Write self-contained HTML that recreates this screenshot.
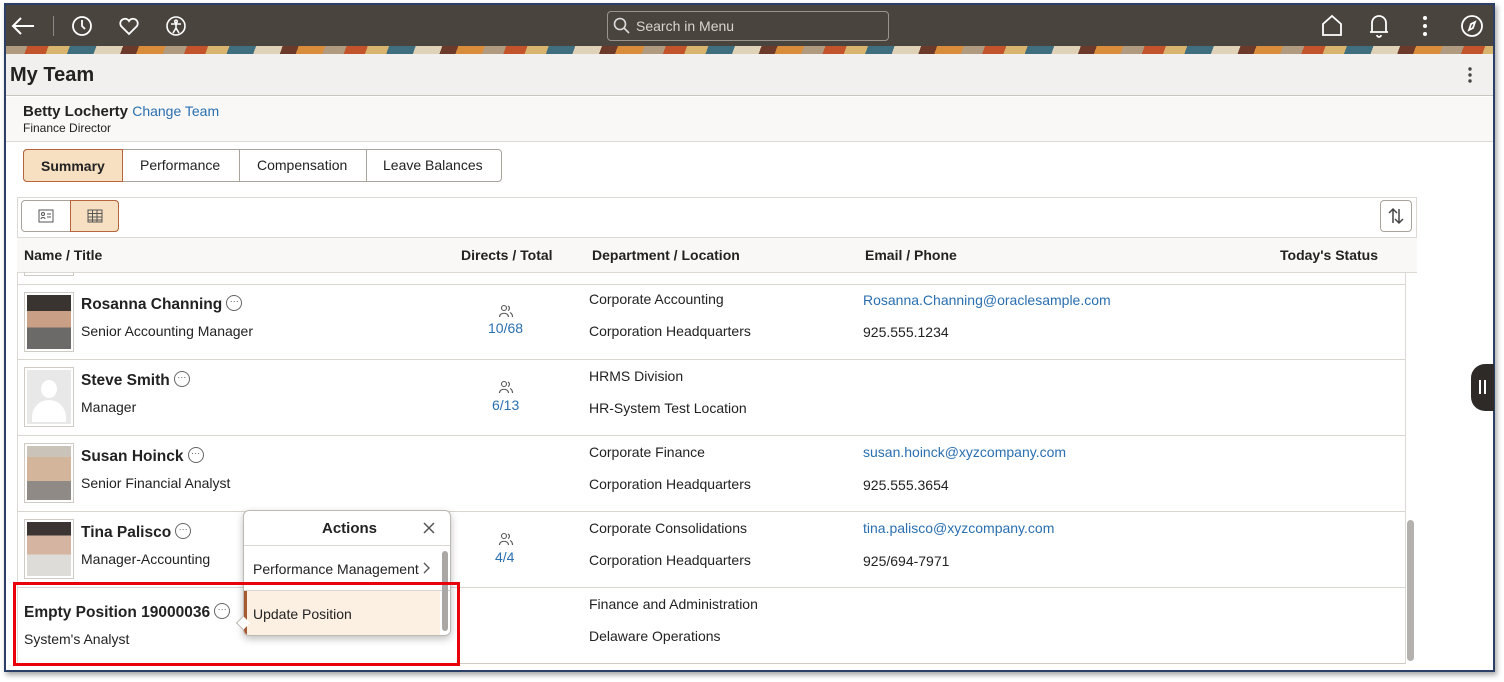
<!DOCTYPE html>
<html><head><meta charset="utf-8"><style>
*{box-sizing:border-box;margin:0;padding:0}
body{width:1504px;height:682px;background:#fff;font-family:"Liberation Sans",Arial,sans-serif;position:relative;overflow:hidden;color:#222}
.a{position:absolute}
.t{font-size:14px;white-space:nowrap}
.b{font-weight:bold}
.nm{font-size:15.5px}
.lnk{color:#2a6fb0}
.hl{height:1px;background:#d9d6d2}
.ph{position:absolute;left:24px;width:50px;height:60px;border:1px solid #cfcac4;background:#fff;padding:2px}
.ph div{width:100%;height:100%}
.dots{display:inline-block;width:16px;height:16px;border:1px solid #666;border-radius:50%;vertical-align:middle;position:relative;top:-2px;margin-left:4px;font-size:9px;line-height:10px;text-align:center;color:#555;font-weight:normal}
</style></head><body>
<div class="a" style="left:4px;top:3px;width:1491px;height:669px;border:2px solid #2c3f66;box-shadow:2px 3px 5px rgba(0,0,0,.35);background:#fff"></div>
<div class="a" style="left:6px;top:5px;width:1487px;height:41px;background:#4a443e"></div>
<div class="a" style="left:6px;top:46px;width:1487px;height:8px;background:repeating-linear-gradient(110deg,#b09a80 0 20px,#c2532a 20px 40px,#d9b46e 40px 60px,#3f6f7e 60px 85px,#e0d2b8 85px 110px,#6b3a2a 110px 125px,#d98c3a 125px 150px)"></div>
<svg class="a" style="left:10px;top:13px" width="26" height="26" viewBox="0 0 26 26" fill="none" stroke="#fff" stroke-width="2"><path d="M24 13H3M11 5l-8 8 8 8"/></svg>
<div class="a" style="left:53px;top:16px;width:1px;height:20px;background:#888"></div>
<svg class="a" style="left:71px;top:15px" width="22" height="22" viewBox="0 0 22 22" fill="none" stroke="#fff" stroke-width="1.8"><circle cx="11" cy="11" r="9"/><path d="M11 5v6l3 3"/></svg>
<svg class="a" style="left:118px;top:15px" width="22" height="22" viewBox="0 0 22 22" fill="none" stroke="#fff" stroke-width="1.8"><path d="M11 19L3 11a4.5 4.5 0 018-5 4.5 4.5 0 018 5z"/></svg>
<svg class="a" style="left:165px;top:15px" width="22" height="22" viewBox="0 0 22 22" fill="none" stroke="#fff" stroke-width="1.6"><circle cx="11" cy="11" r="9"/><circle cx="11" cy="6.5" r="1.3"/><path d="M6 9h10M11 9v4l-3 5M11 13l3 5"/></svg>
<div class="a" style="left:607px;top:11px;width:282px;height:30px;border:1px solid #9a948d;border-radius:4px;background:#4a443e"></div>
<svg class="a" style="left:613px;top:17px" width="18" height="18" viewBox="0 0 18 18" fill="none" stroke="#ddd" stroke-width="1.6"><circle cx="7" cy="7" r="5.5"/><path d="M11 11l5 5"/></svg>
<div class="a t" style="left:636px;top:18px;color:#d8d4cf;font-size:14px">Search in Menu</div>
<svg class="a" style="left:1320px;top:14px" width="24" height="24" viewBox="0 0 24 24" fill="none" stroke="#fff" stroke-width="1.8"><path d="M3 21V10l9-8 9 8v11z"/></svg>
<svg class="a" style="left:1368px;top:13px" width="22" height="26" viewBox="0 0 22 26" fill="none" stroke="#fff" stroke-width="1.8"><path d="M4 19V10a7 7 0 0114 0v9zM2 19h18M9 22a2 2 0 004 0"/></svg>
<svg class="a" style="left:1418px;top:14px" width="14" height="24" viewBox="0 0 14 24" fill="#fff"><circle cx="7" cy="4" r="2"/><circle cx="7" cy="12" r="2"/><circle cx="7" cy="20" r="2"/></svg>
<svg class="a" style="left:1460px;top:14px" width="24" height="24" viewBox="0 0 24 24" fill="none" stroke="#fff" stroke-width="1.8"><circle cx="12" cy="12" r="10"/><path d="M15 8l-2 6-4 2 2-6z"/></svg>
<div class="a" style="left:6px;top:54px;width:1487px;height:42px;background:#f1f0ee;border-bottom:1px solid #c9c5c0"></div>
<div class="a b" style="left:10px;top:64px;font-size:20px;color:#222">My Team</div>
<svg class="a" style="left:1465px;top:66px" width="10" height="18" viewBox="0 0 10 18" fill="#444"><circle cx="5" cy="3" r="1.7"/><circle cx="5" cy="9" r="1.7"/><circle cx="5" cy="15" r="1.7"/></svg>
<div class="a" style="left:6px;top:97px;width:1487px;height:45px;background:#f9f8f6;border-bottom:1px solid #dcd8d3"></div>
<div class="a t" style="left:23px;top:103px;font-size:15px"><b>Betty Locherty</b> <span class="lnk" style="font-size:14px">Change Team</span></div>
<div class="a t" style="left:23px;top:121px;font-size:12px">Finance Director</div>
<div class="a" style="left:23px;top:149px;width:479px;height:33px;border:1px solid #a9a39c;border-radius:4px;background:#fff"></div>
<div class="a" style="left:23px;top:149px;width:100px;height:33px;border:1px solid #b5643b;border-radius:4px 0 0 4px;background:#f7dfc1"></div>
<div class="a" style="left:239px;top:150px;width:1px;height:31px;background:#a9a39c"></div>
<div class="a" style="left:366px;top:150px;width:1px;height:31px;background:#a9a39c"></div>
<div class="a t b" style="left:41px;top:158px">Summary</div>
<div class="a t" style="left:140px;top:157px">Performance</div>
<div class="a t" style="left:257px;top:157px">Compensation</div>
<div class="a t" style="left:383px;top:157px">Leave Balances</div>
<div class="a" style="left:17px;top:197px;width:1400px;height:76px;border:1px solid #dcd8d3;border-bottom:none"></div>
<div class="a" style="left:21px;top:200px;width:98px;height:32px;border:1px solid #a9a39c;border-radius:4px;background:#fff"></div>
<div class="a" style="left:70px;top:200px;width:49px;height:32px;border:1px solid #b5643b;border-radius:0 4px 4px 0;background:#f7dfc1"></div>
<svg class="a" style="left:38px;top:209px" width="16" height="14" viewBox="0 0 16 14" fill="none" stroke="#555" stroke-width="1"><rect x="1" y="1" width="14" height="12"/><circle cx="5" cy="5" r="1.5"/><path d="M3 10c0-2 4-2 4 0M9 5h4M9 8h4"/></svg>
<svg class="a" style="left:87px;top:209px" width="16" height="14" viewBox="0 0 16 14" fill="none" stroke="#555" stroke-width="1"><rect x="1" y="1" width="14" height="12"/><path d="M1 4.5h14M1 8h14M1 11h14M5.5 1v12M10 1v12"/></svg>
<div class="a" style="left:1380px;top:200px;width:32px;height:32px;border:1px solid #a9a39c;border-radius:4px"></div>
<svg class="a" style="left:1387px;top:207px" width="18" height="18" viewBox="0 0 18 18" fill="none" stroke="#444" stroke-width="1.5"><path d="M6 16V2M2 6l4-4 4 4M12 2v14M8 12l4 4 4-4"/></svg>
<div class="a" style="left:17px;top:237px;width:1400px;height:36px;background:#f9f8f6;border-top:1px solid #dcd8d3;border-bottom:1px solid #dcd8d3"></div>
<div class="a t b" style="left:24px;top:247px">Name / Title</div>
<div class="a t b" style="left:461px;top:247px">Directs / Total</div>
<div class="a t b" style="left:592px;top:247px">Department / Location</div>
<div class="a t b" style="left:865px;top:247px">Email / Phone</div>
<div class="a t b" style="left:1280px;top:247px">Today's Status</div>
<div class="a" style="left:17px;top:273px;width:1389px;height:391px;border-left:1px solid #dcd8d3;border-right:1px solid #dcd8d3;border-bottom:1px solid #cfcac4"></div>
<div class="a" style="left:24px;top:272px;width:50px;height:4px;border:1px solid #cfcac4;border-top:none"></div>
<div class="a hl" style="left:18px;top:284px;width:1387px"></div>
<div class="a hl" style="left:18px;top:359px;width:1387px"></div>
<div class="a hl" style="left:18px;top:435px;width:1387px"></div>
<div class="a hl" style="left:18px;top:511px;width:1387px"></div>
<div class="a hl" style="left:18px;top:587px;width:1387px"></div>
<div class="a" style="left:1407px;top:520px;width:7px;height:141px;border-radius:4px;background:#b3b0ad"></div>
<div class="ph" style="top:292px"><div style="background:linear-gradient(180deg,#3a3430 0 30%,#c99f86 30% 60%,#6b6a68 60%)"></div></div>
<div class="a t b nm" style="left:81px;top:296px">Rosanna Channing<span class="dots">···</span></div>
<div class="a t" style="left:81px;top:323px">Senior Accounting Manager</div>
<svg class="a" style="left:498px;top:304px" width="16" height="14" viewBox="0 0 16 14" fill="none" stroke="#555" stroke-width="1.1"><circle cx="6" cy="4" r="2.5"/><path d="M1.5 13c0-5 9-5 9 0M10 2a2.5 2.5 0 010 4.5M12 8.5c2 1 2.5 2.5 2.5 4.5"/></svg>
<div class="a t lnk" style="left:488px;top:320px">10/68</div>
<div class="a t" style="left:589px;top:291px">Corporate Accounting</div>
<div class="a t" style="left:589px;top:323px">Corporation Headquarters</div>
<div class="a t lnk" style="left:863px;top:292px">Rosanna.Channing@oraclesample.com</div>
<div class="a t" style="left:863px;top:324px">925.555.1234</div>
<div class="ph" style="top:367px"><div style="background:#e8e8e8;position:relative"><div style="position:absolute;left:14px;top:10px;width:16px;height:18px;border-radius:50%;background:#fff"></div><div style="position:absolute;left:5px;top:30px;width:34px;height:22px;border-radius:17px 17px 0 0;background:#fff"></div></div></div>
<div class="a t b nm" style="left:81px;top:372px">Steve Smith<span class="dots">···</span></div>
<div class="a t" style="left:81px;top:399px">Manager</div>
<svg class="a" style="left:498px;top:380px" width="16" height="14" viewBox="0 0 16 14" fill="none" stroke="#555" stroke-width="1.1"><circle cx="6" cy="4" r="2.5"/><path d="M1.5 13c0-5 9-5 9 0M10 2a2.5 2.5 0 010 4.5M12 8.5c2 1 2.5 2.5 2.5 4.5"/></svg>
<div class="a t lnk" style="left:492px;top:397px">6/13</div>
<div class="a t" style="left:589px;top:368px">HRMS Division</div>
<div class="a t" style="left:589px;top:400px">HR-System Test Location</div>
<div class="ph" style="top:443px"><div style="background:linear-gradient(180deg,#c9c3ba 0 20%,#d2b59a 20% 65%,#8f8a86 65%)"></div></div>
<div class="a t b nm" style="left:81px;top:448px">Susan Hoinck<span class="dots">···</span></div>
<div class="a t" style="left:81px;top:475px">Senior Financial Analyst</div>
<div class="a t" style="left:589px;top:444px">Corporate Finance</div>
<div class="a t" style="left:589px;top:476px">Corporation Headquarters</div>
<div class="a t lnk" style="left:863px;top:444px">susan.hoinck@xyzcompany.com</div>
<div class="a t" style="left:863px;top:477px">925.555.3654</div>
<div class="ph" style="top:519px"><div style="background:linear-gradient(180deg,#3b3432 0 25%,#d6b4a2 25% 60%,#dedcd8 60%)"></div></div>
<div class="a t b nm" style="left:81px;top:524px">Tina Palisco<span class="dots">···</span></div>
<div class="a t" style="left:81px;top:551px">Manager-Accounting</div>
<svg class="a" style="left:498px;top:532px" width="16" height="14" viewBox="0 0 16 14" fill="none" stroke="#555" stroke-width="1.1"><circle cx="6" cy="4" r="2.5"/><path d="M1.5 13c0-5 9-5 9 0M10 2a2.5 2.5 0 010 4.5M12 8.5c2 1 2.5 2.5 2.5 4.5"/></svg>
<div class="a t lnk" style="left:495px;top:549px">4/4</div>
<div class="a t" style="left:589px;top:520px">Corporate Consolidations</div>
<div class="a t" style="left:589px;top:552px">Corporation Headquarters</div>
<div class="a t lnk" style="left:863px;top:520px">tina.palisco@xyzcompany.com</div>
<div class="a t" style="left:863px;top:553px">925/694-7971</div>
<div class="a t b nm" style="left:24px;top:604px">Empty Position 19000036<span class="dots">···</span></div>
<div class="a t" style="left:24px;top:631px">System's Analyst</div>
<div class="a t" style="left:589px;top:596px">Finance and Administration</div>
<div class="a t" style="left:589px;top:628px">Delaware Operations</div>
<div class="a" style="left:243px;top:510px;width:208px;height:126px;background:#fff;border:1px solid #bdb8b2;border-radius:6px;box-shadow:0 3px 8px rgba(0,0,0,.25);overflow:hidden">
 <div class="a t b" style="left:78px;top:9px;font-size:15px">Actions</div>
 <svg class="a" style="left:179px;top:11px" width="12" height="12" viewBox="0 0 12 12" stroke="#555" stroke-width="1.5"><path d="M1 1l10 10M11 1L1 11"/></svg>
 <div class="a hl" style="left:0;top:34px;width:208px"></div>
 <div class="a t" style="left:9px;top:50px">Performance Management</div>
 <svg class="a" style="left:179px;top:51px" width="8" height="12" viewBox="0 0 8 12" fill="none" stroke="#555" stroke-width="1.3"><path d="M1 1l5 5-5 5"/></svg>
 <div class="a hl" style="left:0;top:79px;width:208px"></div>
 <div class="a" style="left:0;top:80px;width:196px;height:44px;background:#fcf0e3;border-left:3px solid #a55a33"></div>
 <div class="a t" style="left:9px;top:95px">Update Position</div>
 <div class="a" style="left:198px;top:40px;width:6px;height:80px;border-radius:3px;background:#aaa7a4"></div>
</div>
<div class="a" style="left:238px;top:618px;width:10px;height:10px;background:#fff;border-left:1px solid #bdb8b2;border-bottom:1px solid #bdb8b2;transform:rotate(45deg)"></div>
<div class="a" style="left:13px;top:582px;width:447px;height:84px;border:3px solid #e8000b"></div>
<div class="a" style="left:1471px;top:364px;width:23px;height:47px;background:#2d2a27;border-radius:14px 0 0 14px"></div>
<div class="a" style="left:1479px;top:380px;width:2px;height:14px;background:#fff"></div>
<div class="a" style="left:1484px;top:380px;width:2px;height:14px;background:#fff"></div>
</body></html>
